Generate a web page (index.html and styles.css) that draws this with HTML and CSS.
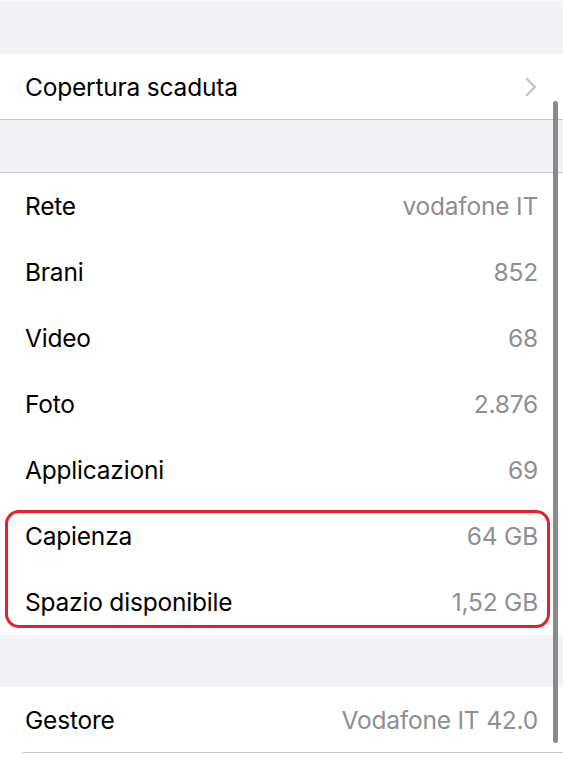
FILE: index.html
```html
<!DOCTYPE html>
<html lang="it">
<head>
<meta charset="UTF-8">
<meta name="viewport" content="width=device-width, initial-scale=1.0">
<title>Info</title>
<link rel="stylesheet" href="styles.css">
</head>
<body>

<div class="screen">
	<!-- Copertura -->
	<div class="gap gap-top"></div>
	<div class="group">
		<div class="row row-link">
			<span class="label">Copertura scaduta</span>
			<svg class="chevron" width="12" height="20" viewBox="0 0 12 20"><path d="M2 2 L10 10 L2 18" fill="none" stroke="#c4c4c7" stroke-width="2.4" stroke-linecap="round" stroke-linejoin="round"/></svg>
		</div>
	</div>

	<!-- Info -->
	<div class="gap"></div>
	<div class="group">
		<div class="row"><span class="label">Rete</span><span class="value">vodafone IT</span></div>
		<div class="row"><span class="label">Brani</span><span class="value">852</span></div>
		<div class="row"><span class="label">Video</span><span class="value">68</span></div>
		<div class="row"><span class="label">Foto</span><span class="value">2.876</span></div>
		<div class="row"><span class="label">Applicazioni</span><span class="value">69</span></div>
		<div class="highlight">
			<div class="row"><span class="label">Capienza</span><span class="value">64 GB</span></div>
			<div class="row"><span class="label">Spazio disponibile</span><span class="value">1,52 GB</span></div>
		</div>
	</div>

	<!-- Gestore -->
	<div class="gap gap-plain"></div>
	<div class="group group-open">
		<div class="row row-sep"><span class="label">Gestore</span><span class="value">Vodafone IT 42.0</span></div>
	</div>

	<div class="scrollbar"></div>
</div>

</body>
</html>
```

FILE: styles.css
```css
body {
	margin: 0;
	font-family: Inter, Roboto, "Liberation Sans", sans-serif;
	background-color: #fff;
}
.screen {
	position: relative;
	width: 563px;
	height: 758px;
	overflow: hidden;
	background-color: #fff;
}
.gap {
	height: 52px;
	background-color: #f2f2f7;
	border-bottom: 1px solid #c8c7cc;
}
.gap-top {
	height: 53px;
	border-top: 1px solid #fafafc;
	border-bottom: none;
}
.gap-plain {
	border-bottom: none;
}
.group {
	background-color: #fff;
}
.group-open {
	padding-bottom: 10px;
}
.row {
	display: flex;
	align-items: center;
	justify-content: space-between;
	height: 66px;
	padding: 0 25px 0 25px;
	font-size: 24.5px;
	letter-spacing: -0.2px;
}
.row-link {
	height: 65px;
	border-bottom: 1px solid #c8c7cc;
}
.row-sep {
	height: 65px;
	margin-left: 22px;
	padding-left: 3px;
	border-bottom: 1px solid #c8c7cc;
}
.label {
	color: #000;
}
.value {
	color: #8e8e93;
}
.chevron {
	margin-right: 1px;
}
.highlight {
	position: relative;
}
.highlight::after {
	content: "";
	position: absolute;
	left: 5px;
	right: 13px;
	top: 7px;
	bottom: 7px;
	border: 3px solid #e2222e;
	border-radius: 14px;
}
.scrollbar {
	position: absolute;
	left: 553px;
	top: 101px;
	width: 5px;
	height: 642px;
	border-radius: 3px;
	background-color: #8a8a8a;
}
```
